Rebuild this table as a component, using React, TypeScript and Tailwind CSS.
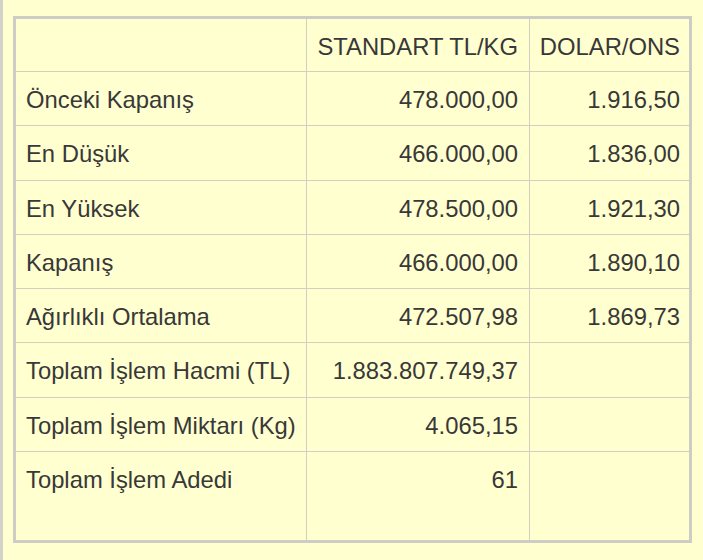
import React from "react";

type Row = { label: string; tl: string; usd: string; h: string };

const rows: Row[] = [
  { label: "Önceki Kapanış", tl: "478.000,00", usd: "1.916,50", h: "h-[54px]" },
  { label: "En Düşük", tl: "466.000,00", usd: "1.836,00", h: "h-[55px]" },
  { label: "En Yüksek", tl: "478.500,00", usd: "1.921,30", h: "h-[54px]" },
  { label: "Kapanış", tl: "466.000,00", usd: "1.890,10", h: "h-[54px]" },
  { label: "Ağırlıklı Ortalama", tl: "472.507,98", usd: "1.869,73", h: "h-[54px]" },
  { label: "Toplam İşlem Hacmi (TL)", tl: "1.883.807.749,37", usd: "", h: "h-[55px]" },
  { label: "Toplam İşlem Miktarı (Kg)", tl: "4.065,15", usd: "", h: "h-[54px]" },
  { label: "Toplam İşlem Adedi", tl: "61", usd: "", h: "h-[88px]" },
];

const cell = "border-[#cfcfc4] pt-[14px] leading-[27px] whitespace-nowrap";

const App = () => {
  return (
    <div className="w-[703px] h-[560px] bg-[#ffffd0] border-l-[3px] border-[#d2d2c8] pl-[10px] pt-4 font-['Liberation_Sans',Arial,sans-serif] text-[23.8px] text-[#383838]">
      <div className="w-[679px] border-[3px] border-[#cdcdc6] grid grid-cols-[291px_223px_159px]">
        {/* header */}
        <div className={`${cell} h-[53px] border-r border-b`}></div>
        <div className={`${cell} h-[53px] border-r border-b text-right pr-[11px]`}>STANDART TL/KG</div>
        <div className={`${cell} h-[53px] border-b text-right pr-[9px]`}>DOLAR/ONS</div>

        {rows.map((r, i) => {
          const last = i === rows.length - 1;
          const bb = last ? "" : "border-b";
          return (
            <React.Fragment key={r.label}>
              <div className={`${cell} ${r.h} ${bb} border-r pl-[10px]`}>{r.label}</div>
              <div className={`${cell} ${r.h} ${bb} border-r text-right pr-[11px]`}>{r.tl}</div>
              <div className={`${cell} ${r.h} ${bb} text-right pr-[9px]`}>{r.usd}</div>
            </React.Fragment>
          );
        })}
      </div>
    </div>
  );
};

export default App;
